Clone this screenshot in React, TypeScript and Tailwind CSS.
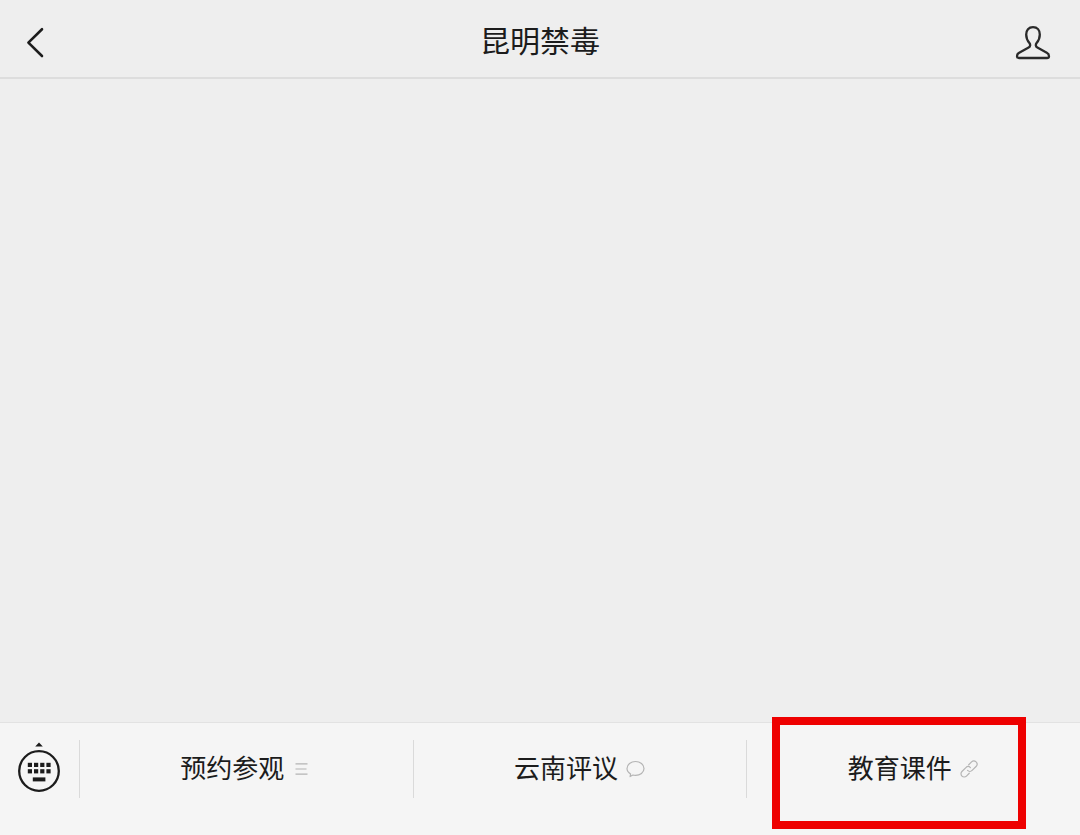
import type { ReactNode } from "react";

function BackIcon() {
  return (
    <svg width="20" height="32" viewBox="0 0 20 32" fill="none" stroke="#1c1c1c" strokeWidth="2.6" strokeLinecap="round" strokeLinejoin="round" aria-hidden="true">
      <path d="M17 2.200 3.400 15.600 17 29" />
    </svg>
  );
}

function PersonIcon() {
  return (
    <svg width="36" height="36" viewBox="0 0 36 36" fill="none" stroke="#2a2a2a" strokeWidth="2.300" strokeLinejoin="round" aria-hidden="true">
      <path d="M18 2.200C13.600 2.200 11.200 5.300 11.200 9.500C11.200 13.500 12.900 16.300 14.400 18C15.600 19.500 15.400 21.600 13.600 22.600L4.200 27.700C2.500 28.600 2 29.700 2 31.200C2 32.500 2.700 33 4 33H32C33.300 33 34 32.500 34 31.200C34 29.700 33.500 28.600 31.800 27.700L22.400 22.600C20.600 21.600 20.400 19.500 21.600 18C23.100 16.300 24.800 13.500 24.800 9.500C24.800 5.300 22.400 2.200 18 2.200Z" />
    </svg>
  );
}

function KeyboardIcon() {
  const columns = [10.8, 17, 23.2, 29.4];
  return (
    <svg width="44" height="52" viewBox="0 0 44 52" fill="#1c1c1c" aria-hidden="true">
      <path d="M22 1.400 25.800 5.600H18.200Z" />
      <circle cx="22" cy="30" r="19.800" fill="none" stroke="#1c1c1c" strokeWidth="2.300" />
      {columns.map((x) => (
        <g key={x}>
          <rect x={x} y="21.800" width="4.200" height="4.200" />
          <rect x={x} y="28.200" width="4.200" height="4.200" />
        </g>
      ))}
      <rect x="15.800" y="36.400" width="12.600" height="4" />
    </svg>
  );
}

function ListIcon() {
  return (
    <svg width="20" height="20" viewBox="0 0 20 20" fill="none" stroke="#b4b4b4" strokeWidth="1.200" aria-hidden="true">
      <path d="M3.500 4.900H15.500M3.500 10H14.500M3.500 15.100H15.500" />
    </svg>
  );
}

function BubbleIcon() {
  return (
    <svg width="20" height="20" viewBox="0 0 20 20" fill="none" stroke="#b4b4b4" strokeWidth="1.200" strokeLinejoin="round" aria-hidden="true">
      <path d="M4.100 17.600 4.600 14.900C2.500 13.700 1 11.700 1 9.500C1 5.500 4.800 2.500 9.500 2.500S18 5.500 18 9.500S14.200 16.400 9.500 16.400C8.600 16.400 7.700 16.300 6.900 16Z" />
    </svg>
  );
}

function LinkIcon() {
  return (
    <svg width="20" height="20" viewBox="0 0 20 20" fill="none" stroke="#b4b4b4" strokeWidth="1.200" strokeLinecap="round" aria-hidden="true">
      <g transform="translate(-1 0) rotate(-45 10 10)">
        <path d="M7.200 13.200H3.200A3.200 3.200 0 0 1 3.200 6.800H8.800A3.200 3.200 0 0 1 12 10" />
        <path d="M12.800 6.800H16.800A3.200 3.200 0 0 1 16.800 13.200H11.200A3.200 3.200 0 0 1 8 10" />
      </g>
    </svg>
  );
}

function MenuItem({ label, icon, highlighted = false }: { label: string; icon: ReactNode; highlighted?: boolean }) {
  return (
    <li className="relative flex flex-1">
      <span className="my-[17px] w-px bg-[#dadada]" />
      <button type="button" className="flex h-[92px] flex-1 items-center justify-center gap-2 text-[26px] leading-8 text-[#1c1c1c]">
        <span className="pb-1">{label}</span>
        {icon}
      </button>
      {highlighted && (
        <span className="pointer-events-none absolute -top-1.5 right-[54px] left-[26px] h-28 border-8 border-[#ee0000]" />
      )}
    </li>
  );
}

export default function App() {
  return (
    <div className="flex min-h-screen flex-col bg-[#eeeeee] font-['Noto_Sans_CJK_SC',sans-serif] text-[#1c1c1c]">
      <header className="flex items-center justify-between border-b-2 border-[#dddddd] px-[29px] pt-[25px] pb-4">
        <button type="button" aria-label="返回" className="-ml-1 flex w-10 py-0.5">
          <BackIcon />
        </button>
        <h1 className="pb-2 text-[30px] leading-7">昆明禁毒</h1>
        <button type="button" aria-label="账号资料">
          <PersonIcon />
        </button>
      </header>

      <main className="flex-1" />

      <nav aria-label="公众号菜单" className="flex items-start border-t border-[#e2e2e2] bg-[#f5f5f5] pb-5">
        <button type="button" aria-label="切换到键盘" className="flex h-[88px] w-[79px] items-center justify-center pr-px">
          <KeyboardIcon />
        </button>
        <ul className="flex flex-1">
          <MenuItem label="预约参观" icon={<ListIcon />} />
          <MenuItem label="云南评议" icon={<BubbleIcon />} />
          <MenuItem label="教育课件" icon={<LinkIcon />} highlighted />
        </ul>
      </nav>
    </div>
  );
}
